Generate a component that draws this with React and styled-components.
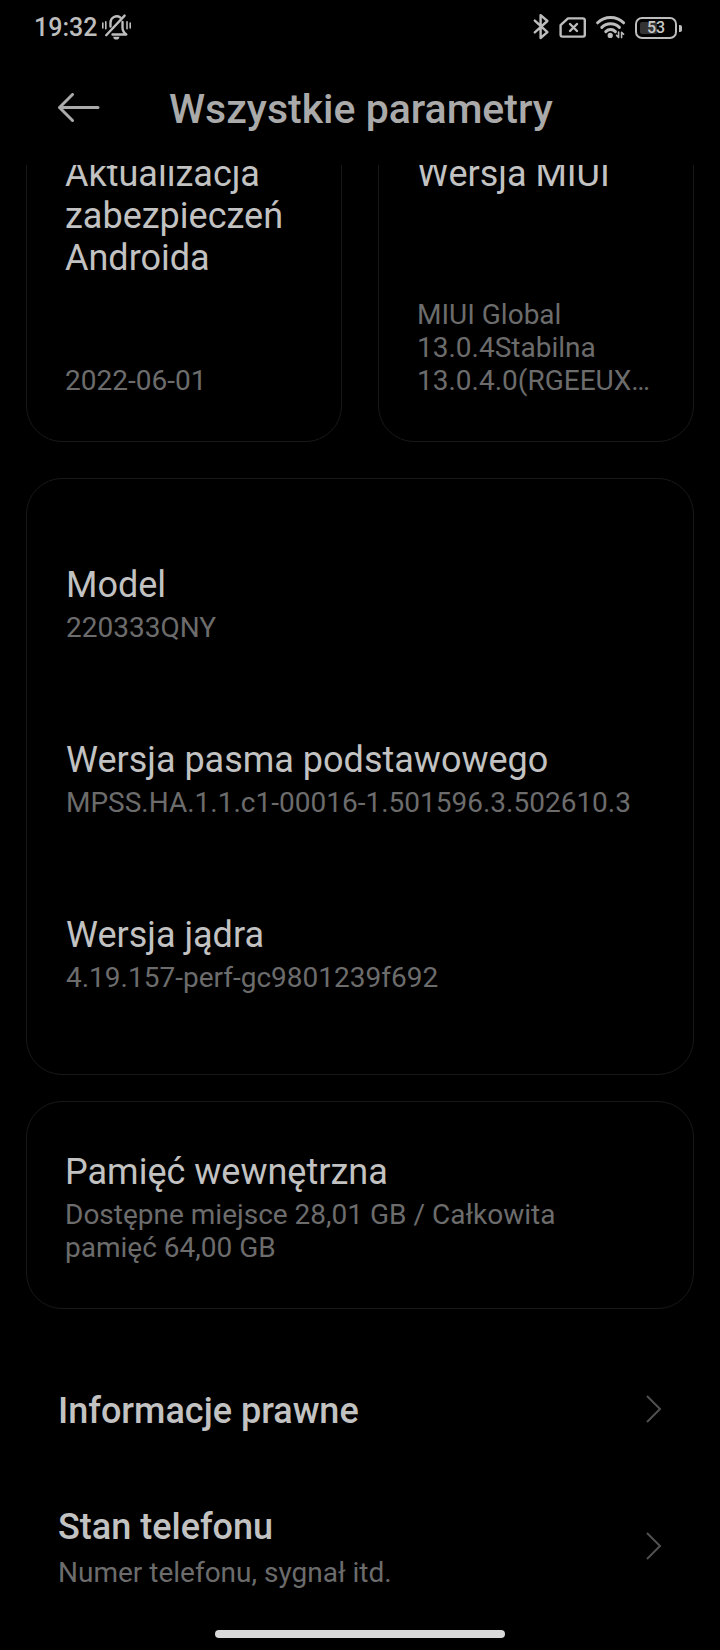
import React from 'react';
import styled, { createGlobalStyle } from 'styled-components';

const params = [
  { name: 'Model', value: '220333QNY' },
  { name: 'Wersja pasma podstawowego', value: 'MPSS.HA.1.1.c1-00016-1.501596.3.502610.3' },
  { name: 'Wersja jądra', value: '4.19.157-perf-gc9801239f692' },
];

const links = [
  { title: 'Informacje prawne' },
  { title: 'Stan telefonu', text: 'Numer telefonu, sygnał itd.' },
];

const MutedIcon = () => (
  <Icon width="31" height="32" viewBox="0 0 31 32" aria-hidden="true">
    <path d="M9.5 14.5V10.5a6.2 6.2 0 0 1 9.8-5" />
    <path d="M21.5 10V15.5c0 3 1.2 5 3.8 7H11.5" />
    <path d="M5.2 23.2L23.6 3.6" />
    <path d="M1.8 11v5M4.8 9.8v7M26 9.8v7M29.2 11v5" strokeWidth="1.6" />
    <path d="M12.2 24.8h6.2a3.1 2.8 0 0 1-6.2 0z" fill="#bdbdbd" stroke="none" />
  </Icon>
);

const BluetoothIcon = () => (
  <Icon width="18" height="32" viewBox="0 0 18 32" aria-hidden="true">
    <path d="M1.8 8.6L14.4 20.2L7.6 26V3.2L14.4 9L1.8 20.4" />
  </Icon>
);

const NoSimIcon = () => (
  <Icon width="28" height="32" viewBox="0 0 28 32" aria-hidden="true">
    <path d="M9 6.4H24a1.8 1.8 0 0 1 1.8 1.8V22.8a1.8 1.8 0 0 1-1.8 1.8H3.4a1.8 1.8 0 0 1-1.8-1.8V13.2z" />
    <path d="M11 12l7 7M18 12l-7 7" />
  </Icon>
);

const WifiIcon = () => (
  <Icon width="32" height="32" viewBox="0 0 32 32" aria-hidden="true">
    <path d="M2.6 10.8a18.5 18.5 0 0 1 26 0" strokeWidth="3" />
    <path d="M6.8 15.4a12.4 12.4 0 0 1 17.6 0" strokeWidth="3" />
    <path d="M10.8 19.6a6.8 6.8 0 0 1 9.6 0" strokeWidth="3" />
    <circle cx="15.2" cy="23.4" r="2.6" fill="#bdbdbd" stroke="none" />
    <path d="M23.6 20v5.4l-2-2M26.6 25.6v-5.4l2 2" strokeWidth="1.6" />
  </Icon>
);

const BackIcon = () => (
  <svg width="44" height="32" viewBox="0 0 44 32" fill="none" stroke="#aaaaaa" strokeWidth="3" strokeLinecap="round" strokeLinejoin="round" aria-hidden="true">
    <path d="M14.5 1.5L1.5 14.5L14.5 27.5M1.5 14.5H40" />
  </svg>
);

const Chevron = () => (
  <svg width="16" height="32" viewBox="0 0 16 32" fill="none" stroke="#505050" strokeWidth="2" aria-hidden="true">
    <path d="M1 1L14 14L1 27" />
  </svg>
);

const App = () => {
  return (
    <Page>
      <GlobalStyle />
      <StatusBar>
        <StatusGroup $gap={4}>
          <Clock>19:32</Clock>
          <MutedIcon />
        </StatusGroup>
        <StatusGroup $gap={8}>
          <BluetoothIcon />
          <NoSimIcon />
          <WifiIcon />
          <Battery>
            <BatteryBody>
              <BatteryFill style={{ width: '53%' }} />
              <BatteryText>53</BatteryText>
            </BatteryBody>
            <BatteryTip />
          </Battery>
        </StatusGroup>
      </StatusBar>

      <Header>
        <BackButton type="button" aria-label="Wstecz">
          <BackIcon />
        </BackButton>
        <Title>Wszystkie parametry</Title>
      </Header>

      <Viewport>
        <Content>
          <Tiles>
            <Tile>
              <Name>Aktualizacja zabezpieczeń Androida</Name>
              <Value>2022-06-01</Value>
            </Tile>
            <Tile>
              <Name>Wersja MIUI</Name>
              <Value>MIUI Global 13.0.4Stabilna 13.0.4.0(RGEEUX…</Value>
            </Tile>
          </Tiles>

          <ParamCard>
            {params.map((param) => (
              <Param key={param.name}>
                <Name>{param.name}</Name>
                <Value>{param.value}</Value>
              </Param>
            ))}
          </ParamCard>

          <StorageCard>
            <Param>
              <Name>Pamięć wewnętrzna</Name>
              <Value>Dostępne miejsce 28,01 GB / Całkowita pamięć 64,00 GB</Value>
            </Param>
          </StorageCard>
        </Content>

        <Links>
          {links.map((link) => (
            <LinkRow href="#" key={link.title}>
              <LinkText>
                <LinkTitle>{link.title}</LinkTitle>
                {link.text && <Value as="span">{link.text}</Value>}
              </LinkText>
              <Chevron />
            </LinkRow>
          ))}
        </Links>
      </Viewport>

      <HomeBar />
    </Page>
  );
}

const GlobalStyle = createGlobalStyle`
  * {
    box-sizing: border-box;
  }

  body {
    margin: 0;
    background: #000;
    color: #c2c2c2;
    font-family: Roboto, "Noto Sans", sans-serif;
  }

  h1, h2, p {
    margin: 0;
    font-weight: 400;
  }
`;

const Page = styled.div`
  display: flex;
  flex-direction: column;
  min-height: 100vh;
  background: #000;
`;

const StatusBar = styled.div`
  display: flex;
  align-items: center;
  justify-content: space-between;
  height: 56px;
  padding: 0 38px 0 34px;
`;

const StatusGroup = styled.div`
  display: flex;
  align-items: center;
  gap: ${props => props.$gap}px;
`;

const Clock = styled.span`
  color: #bdbdbd;
  font-size: 25px;
  font-weight: 500;
  line-height: 30px;
`;

const Icon = styled.svg`
  display: block;
  fill: none;
  stroke: #bdbdbd;
  stroke-width: 2.4;
  stroke-linecap: round;
  stroke-linejoin: round;
`;

const Battery = styled.div`
  display: flex;
  align-items: center;
  gap: 2px;
  width: 47px;
`;

const BatteryBody = styled.div`
  position: relative;
  flex: 1;
  height: 22px;
  padding: 3px;
  border: 2px solid #bdbdbd;
  border-radius: 7px;
`;

const BatteryFill = styled.div`
  height: 100%;
  border-radius: 2px;
  background: #333;
`;

const BatteryText = styled.span`
  position: absolute;
  inset: 0;
  color: #c8c8c8;
  font-size: 16px;
  font-weight: 500;
  line-height: 18px;
  text-align: center;
`;

const BatteryTip = styled.div`
  width: 3px;
  height: 7px;
  border-radius: 0 2px 2px 0;
  background: #bdbdbd;
`;

const Header = styled.header`
  display: flex;
  align-items: center;
  gap: 67px;
  padding: 29px 58px 32px;
`;

const BackButton = styled.button`
  display: flex;
  padding: 0;
  border: 0;
  background: none;
  cursor: pointer;
`;

const Title = styled.h1`
  color: #aaaaaa;
  font-size: 41px;
  font-weight: 500;
  line-height: 48px;
`;

const Viewport = styled.main`
  overflow: hidden;
`;

// the list is already scrolled a little under the header
const Content = styled.div`
  margin-top: -52px;
  padding: 0 26px;
`;

const Card = styled.section`
  border: 1px solid #181818;
  border-radius: 36px;
`;

const Tiles = styled.div`
  display: grid;
  grid-template-columns: 1fr 1fr;
  gap: 36px;
  margin-bottom: 36px;
`;

const Tile = styled(Card)`
  display: flex;
  flex-direction: column;
  justify-content: space-between;
  gap: 85px;
  padding: 39px 38px 44px;
`;

const ParamCard = styled(Card)`
  display: flex;
  flex-direction: column;
  gap: 95px;
  margin-bottom: 26px;
  padding: 85px 39px 80px;
`;

const StorageCard = styled(Card)`
  padding: 49px 58px 44px 38px;
`;

const Param = styled.div`
  display: flex;
  flex-direction: column;
  gap: 5px;
`;

const Name = styled.h2`
  font-size: 36px;
  line-height: 42px;
`;

const Value = styled.p`
  color: #6c6c6c;
  font-size: 28px;
  font-weight: 400;
  line-height: 33px;
`;

const Links = styled.nav`
  margin-top: 44px;
`;

const LinkRow = styled.a`
  display: flex;
  align-items: center;
  justify-content: space-between;
  padding: 37px 58px;
  color: inherit;
  text-decoration: none;
`;

const LinkText = styled.span`
  display: flex;
  flex-direction: column;
  gap: 8px;
`;

const LinkTitle = styled.span`
  font-size: 36px;
  font-weight: 500;
  line-height: 42px;
`;

const HomeBar = styled.div`
  width: 290px;
  height: 8px;
  margin: auto auto 12px;
  border-radius: 4px;
  background: #d9d9d9;
`;

export default App;
